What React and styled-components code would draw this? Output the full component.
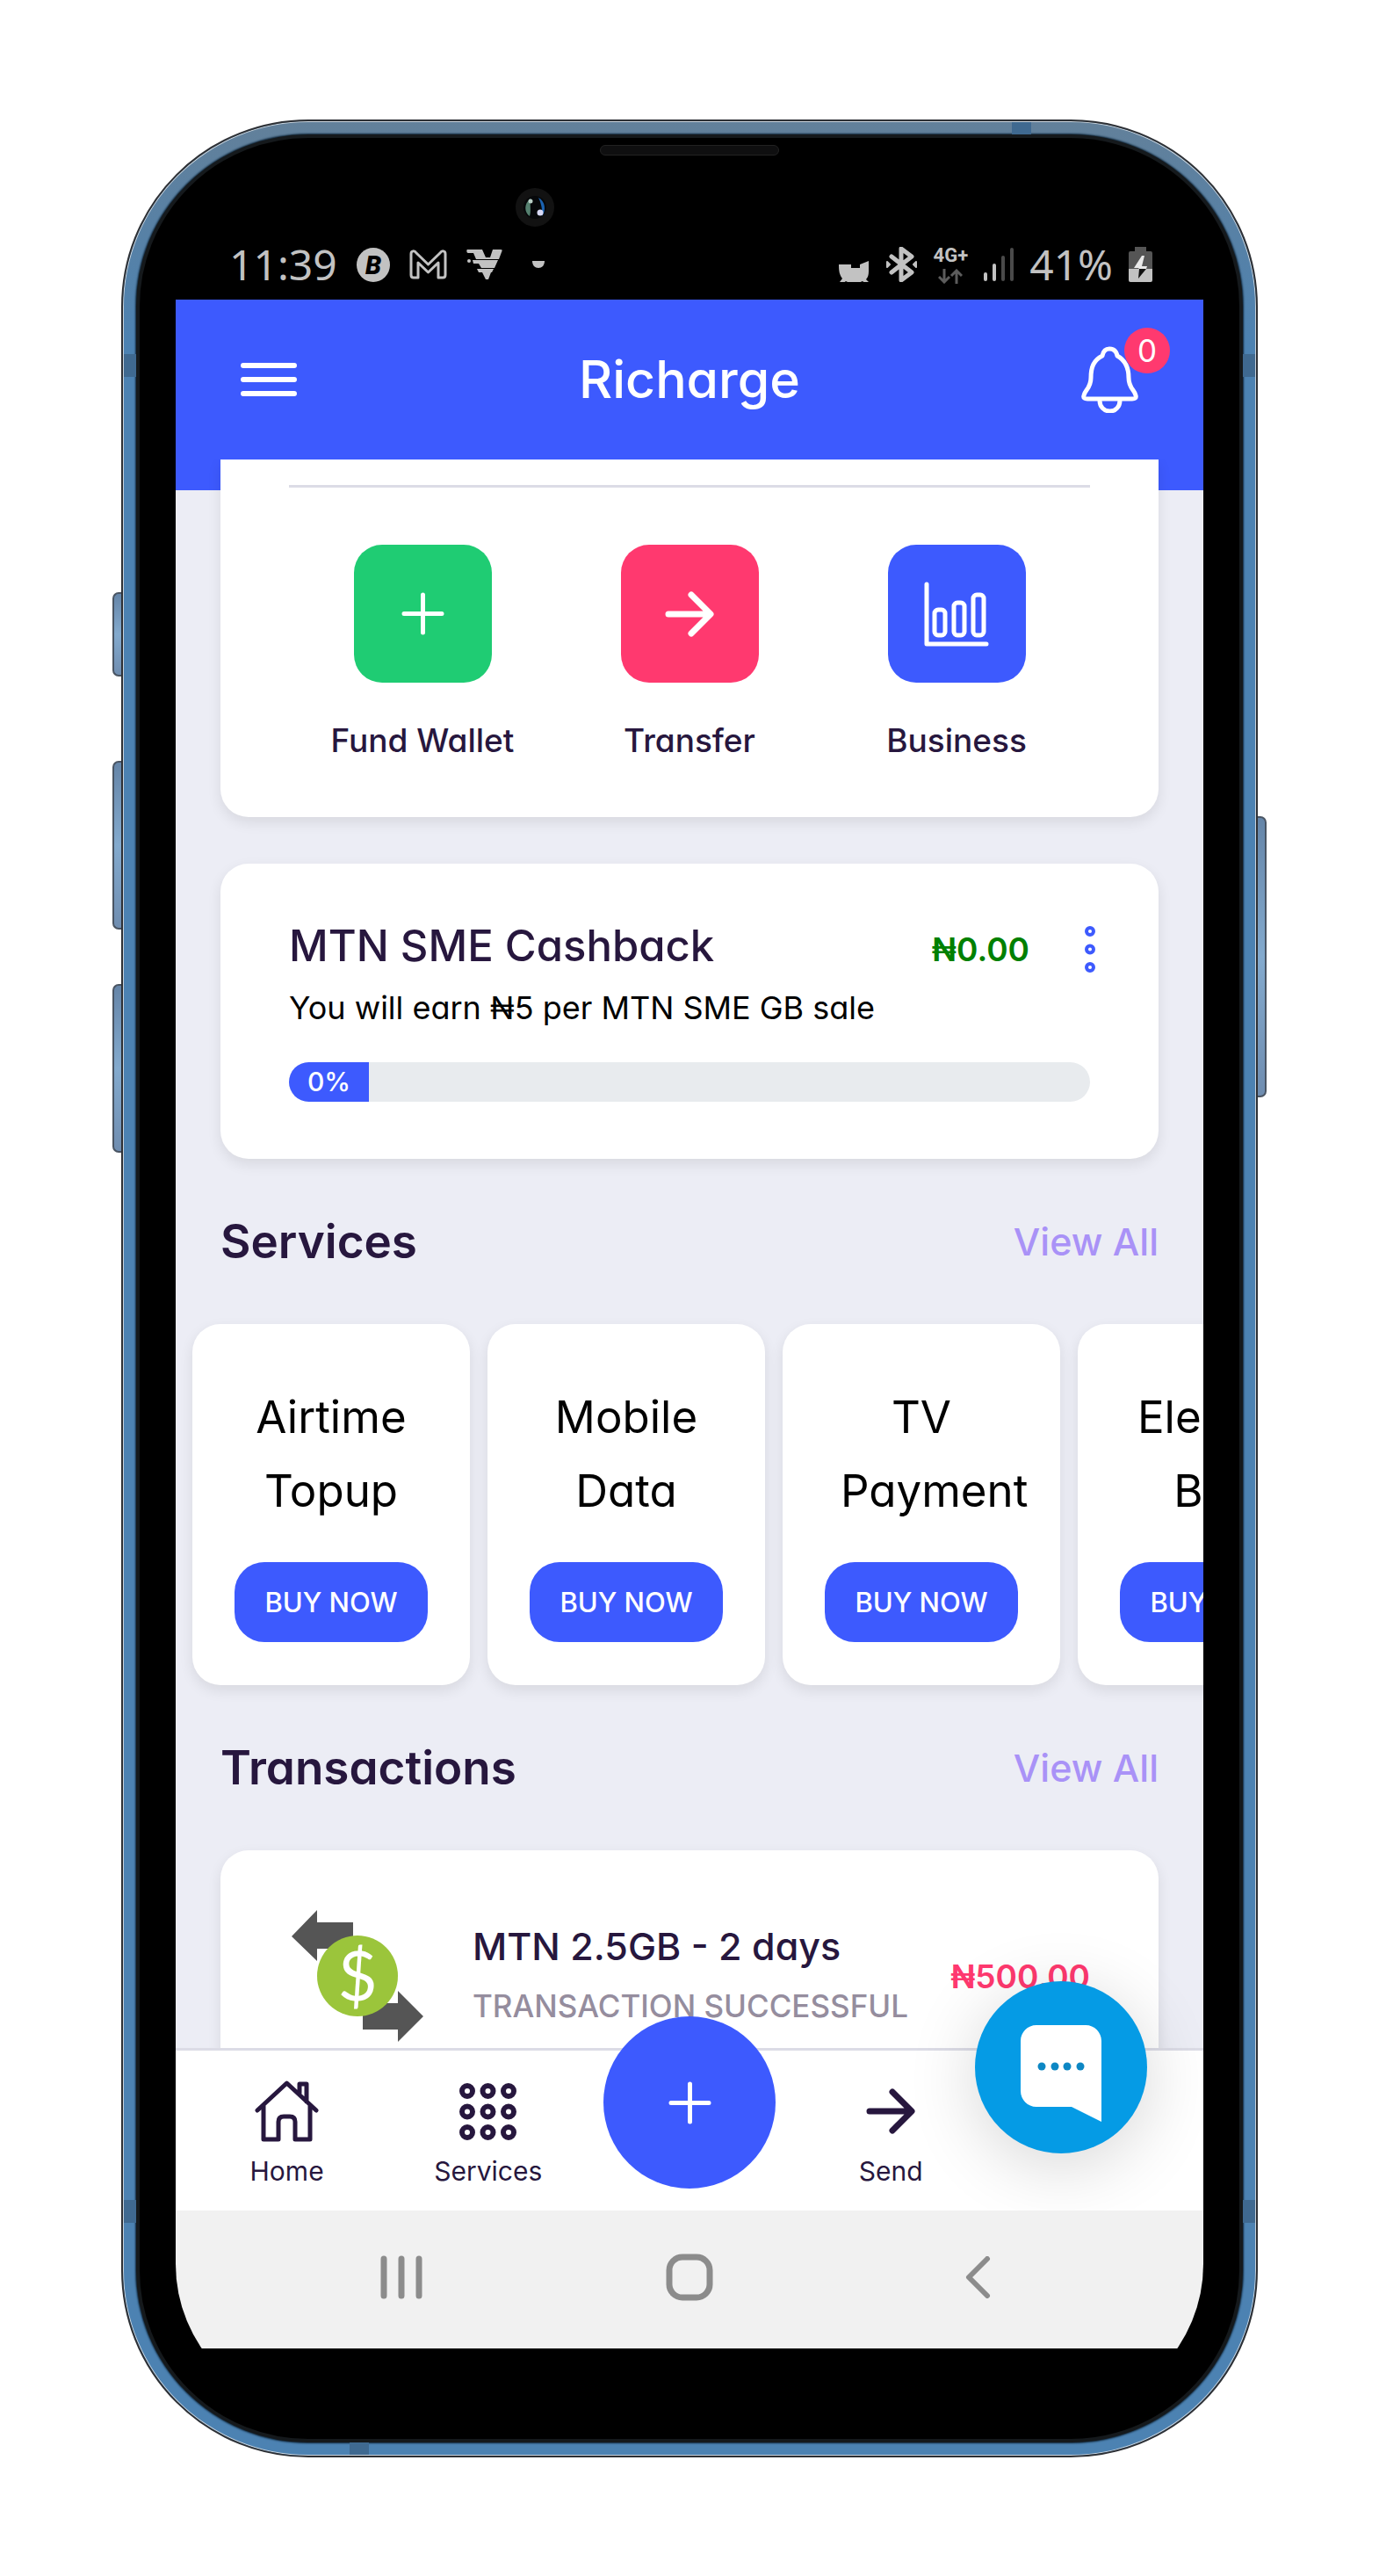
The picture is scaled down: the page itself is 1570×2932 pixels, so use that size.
import React from "react";
import styled, { createGlobalStyle } from "styled-components";

const color = {
  primary: "#3d5afe",
  danger: "#ff396f",
  success: "#1fcc73",
  ink: "#27173e",
  muted: "#958d9e",
  line: "#dcdce6",
  page: "#ecedf5",
  status: "#c2c2c2",
};

const GlobalStyle = createGlobalStyle`
  *, *::before, *::after { box-sizing: border-box; }
  body {
    margin: 0;
    background: #fff;
    color: ${color.ink};
    font-family: Inter, "Noto Sans", sans-serif;
    font-feature-settings: "cv11";
  }
  button { border: 0; padding: 0; background: none; color: inherit; font: inherit; font-feature-settings: inherit; cursor: pointer; }
  a { color: inherit; text-decoration: none; }
  h1, h2, h3, p, ul { margin: 0; padding: 0; }
  ul { list-style: none; }
  svg { display: block; flex: none; }
`;

/* ---------- device ---------- */

const Page = styled.div`
  padding: 136px 138px 135px;
`;

const Phone = styled.div`
  position: relative;
  display: flex;
  max-width: 1294px;
  margin: 0 auto;
  aspect-ratio: 1294 / 2661;
  padding: 15px;
  border: 2px solid #2d3035;
  border-radius: 213px;
  background: linear-gradient(#62809a, #4c82b2 260px);
  box-shadow: inset 0 0 0 1px #c9d3dc;
`;

const SideKey = styled.span`
  position: absolute;
  top: ${(p) => p.$top}px;
  ${(p) => p.$side}: -12px;
  width: 10px;
  height: ${(p) => p.$height}px;
  border: 2px solid #4a5563;
  border-${(p) => (p.$side === "left" ? "right" : "left")}: 0;
  border-radius: ${(p) => (p.$side === "left" ? "7px 0 0 7px" : "0 7px 7px 0")};
  background: linear-gradient(#6585a8, #83aace 50%, #6f8db0);
`;

const AntennaBand = styled.span`
  position: absolute;
  ${(p) => p.$edge}: 1px;
  ${(p) => (p.$edge === "left" || p.$edge === "right" ? "top" : "left")}: ${(p) => p.$at}px;
  width: ${(p) => (p.$edge === "left" || p.$edge === "right" ? 14 : 22)}px;
  height: ${(p) => (p.$edge === "left" || p.$edge === "right" ? 26 : 14)}px;
  background: #3f6990;
`;

const Bezel = styled.div`
  flex: 1;
  min-width: 0;
  display: flex;
  flex-direction: column;
  padding: 114px 41px 103px;
  border: 4px solid #15191c;
  border-radius: 196px;
  background: #000;
  box-shadow: 0 0 2px 1px #10273b;
`;

const Speaker = styled.span`
  position: absolute;
  top: 27px;
  left: 50%;
  width: 204px;
  height: 12px;
  margin-left: -102px;
  border: 1px solid #222;
  border-radius: 6px;
  background: #0f0f10;
`;

const Camera = styled.span`
  position: absolute;
  top: 76px;
  left: 447px;
  display: grid;
  place-items: center;
  width: 44px;
  height: 44px;
  border-radius: 50%;
  background: #121212;
`;

/* ---------- status bar ---------- */

const StatusBar = styled.div`
  display: flex;
  justify-content: space-between;
  align-items: center;
  height: 60px;
  margin-bottom: 10px;
  padding: 0 58px 0 61px;
  color: ${color.status};
  font-family: "Noto Sans", sans-serif;
  font-size: 48px;
  line-height: 60px;
`;

const StatusGroup = styled.div`
  display: flex;
  align-items: center;
  gap: ${(p) => p.$gap}px;
`;

const Network = styled.span`
  display: flex;
  flex-direction: column;
  align-items: center;
  gap: 4px;
  font-family: Roboto, sans-serif;
  font-size: 22px;
  font-weight: 700;
  line-height: 22px;
`;

/* ---------- screen ---------- */

const Screen = styled.div`
  flex: 1;
  min-height: 0;
  display: flex;
  flex-direction: column;
  overflow: hidden;
`;

const Header = styled.header`
  display: grid;
  grid-template-columns: 1fr auto 1fr;
  align-items: center;
  flex: none;
  height: 182px;
  padding: 0 74px;
  background: ${color.primary};
  color: #fff;
`;

const AppTitle = styled.h1`
  font-size: 59px;
  font-weight: 500;
  line-height: 80px;
`;

const BellButton = styled.button`
  position: relative;
  justify-self: end;
`;

const Badge = styled.span`
  position: absolute;
  top: -21px;
  right: -36px;
  width: 52px;
  height: 52px;
  border-radius: 50%;
  background: ${color.danger};
  font-size: 35px;
  line-height: 52px;
  text-align: center;
`;

const Content = styled.main`
  flex: 1;
  min-height: 0;
  overflow: hidden;
  padding: 0 51px;
  background: linear-gradient(${color.primary} 35px, ${color.page} 35px);
`;

const Card = styled.section`
  border-radius: ${(p) => (p.$open ? "0 0 32px 32px" : "32px")};
  padding: ${(p) => p.$pad};
  margin-bottom: ${(p) => (p.$gap ? 53 : 0)}px;
  background: #fff;
  box-shadow: 0 6px 16px rgba(0, 0, 0, 0.09);
`;

const Divider = styled.hr`
  height: 3px;
  margin: 0 0 65px;
  border: 0;
  background: ${color.line};
`;

const Actions = styled.div`
  display: grid;
  grid-template-columns: repeat(3, 1fr);
`;

const Action = styled.a`
  display: flex;
  flex-direction: column;
  align-items: center;
  gap: 38px;
  font-size: 37px;
  font-weight: 500;
  line-height: 56px;
  white-space: nowrap;
`;

const ActionTile = styled.span`
  display: grid;
  place-items: center;
  width: 157px;
  height: 157px;
  border-radius: 32px;
  background: ${(p) => p.$bg};
  color: #fff;
`;

const CashbackHead = styled.div`
  display: flex;
  justify-content: space-between;
  height: 60px;
`;

const CashbackTitle = styled.h2`
  font-size: 49px;
  font-weight: 500;
  line-height: 60px;
`;

const CashbackSide = styled.div`
  display: flex;
  align-items: center;
  align-self: flex-end;
  gap: 63px;
  margin-right: -6px;
  color: ${color.primary};
`;

const Amount = styled.strong`
  color: ${(p) => (p.$debit ? color.danger : "#008000")};
  font-size: 37px;
  font-weight: 600;
  line-height: 53px;
`;

const CashbackNote = styled.p`
  margin: 15px 0 37px;
  color: #000;
  font-size: 36px;
  line-height: 50px;
`;

const Track = styled.div`
  height: 45px;
  overflow: hidden;
  border-radius: 23px;
  background: #e8ebee;
`;

const Fill = styled.div`
  width: 10%;
  height: 100%;
  background: ${color.primary};
  color: #fff;
  font-size: 30px;
  font-weight: 500;
  line-height: 45px;
  text-align: center;
`;

const SectionHead = styled.div`
  display: flex;
  justify-content: space-between;
  align-items: center;
  height: 60px;
  margin: 64px 0;
`;

const SectionTitle = styled.h2`
  font-size: 53px;
  font-weight: 600;
  line-height: 60px;
`;

const ViewAll = styled.a`
  color: #a992f7;
  font-size: 43px;
  font-weight: 500;
  line-height: 60px;
`;

const ServiceRow = styled.ul`
  display: flex;
  gap: 20px;
  margin: 0 -51px;
  padding-left: 19px;
`;

const ServiceCard = styled.li`
  display: flex;
  flex: none;
  flex-direction: column;
  align-items: center;
  width: 316px;
  padding: 64px 48px 49px;
  border-radius: 32px;
  background: #fff;
  box-shadow: 0 6px 16px rgba(0, 0, 0, 0.09);
`;

const ServiceName = styled.h3`
  width: 184px;
  color: #000;
  font-size: 51px;
  font-weight: 400;
  line-height: 84px;
  text-align: center;
`;

const BuyButton = styled.button`
  width: 220px;
  height: 91px;
  margin-top: 39px;
  border-radius: 34px;
  background: ${color.primary};
  color: #fff;
  font-size: 31px;
  font-weight: 500;
  line-height: 91px;
`;

const Transaction = styled.a`
  display: flex;
  align-items: center;
`;

const TransactionText = styled.div`
  flex: 1;
  margin-left: 56px;
  white-space: nowrap;
`;

const TransactionName = styled.h3`
  font-size: 43px;
  font-weight: 500;
  line-height: 68px;
`;

const TransactionStatus = styled.p`
  color: ${color.muted};
  font-size: 35px;
  font-weight: 500;
  line-height: 68px;
`;

/* ---------- bottom ---------- */

const TabBar = styled.nav`
  position: relative;
  display: grid;
  grid-template-columns: repeat(5, 1fr);
  flex: none;
  height: 185px;
  padding: 33px 12px 0;
  border-top: 3px solid ${color.line};
  background: #fff;
`;

const Tab = styled.a`
  display: flex;
  flex-direction: column;
  align-items: center;
  gap: 12px;
  font-size: 30px;
  line-height: 40px;
`;

const TabIcon = styled.span`
  display: grid;
  place-items: center;
  height: 72px;
`;

const RoundButton = styled.button`
  position: absolute;
  display: grid;
  place-items: center;
  width: 196px;
  height: 196px;
  border-radius: 50%;
  color: #fff;
`;

const AddButton = styled(RoundButton)`
  top: -39px;
  left: 50%;
  margin-left: -98px;
  background: ${color.primary};
`;

const ChatButton = styled(RoundButton)`
  right: 64px;
  bottom: 65px;
  padding-top: 14px;
  background: #059be5;
  box-shadow: 0 14px 80px rgba(0, 0, 0, 0.16);
`;

const SystemNavClip = styled.div`
  position: relative;
  flex: none;
  height: 157px;
  overflow: hidden;
  background: #000;
`;

const SystemNav = styled.div`
  display: grid;
  grid-template-columns: 1fr 106px 1fr;
  align-items: center;
  height: 231px;
  padding: 0 233px 80px;
  border-radius: 0 0 170px 170px;
  background: #f1f1f1;
  color: #8c8c8c;
`;

const SystemKey = styled.button`
  justify-self: ${(p) => p.$align};
`;

/* ---------- drawings ---------- */

const Icon = ({ w, h, stroke = 5, children }) => (
  <svg
    width={w}
    height={h}
    viewBox={`0 0 ${w} ${h}`}
    fill="none"
    stroke="currentColor"
    strokeWidth={stroke}
    strokeLinecap="round"
    strokeLinejoin="round"
    aria-hidden="true"
  >
    {children}
  </svg>
);

const MenuIcon = () => (
  <Icon w={64} h={40} stroke={6}>
    <path d="M3 4h58M3 20h58M3 36h58" />
  </Icon>
);

const BellIcon = () => (
  <Icon w={65} h={76}>
    <path d="M32 3c-5 0-7 3-8 8C14 16 11 24 11 36c0 12-7 14-8 20-1 3 1 4 4 4h51c3 0 5-1 4-4-1-6-8-8-8-20 0-12-4-20-13-25-1-5-4-8-9-8z" />
    <path d="M21 62c0 7 5 12 11.500 12S44 69 44 62" />
  </Icon>
);

const PlusIcon = () => (
  <Icon w={49} h={49}>
    <path d="M3 24.500h43M24.500 3v43" />
  </Icon>
);

const ArrowIcon = () => (
  <Icon w={56} h={52} stroke={7}>
    <path d="M4 26h46M30 4l22 22-22 22" />
  </Icon>
);

const ChartIcon = () => (
  <Icon w={74} h={74}>
    <path d="M3 3v68h68" />
    <rect x="12" y="32" width="12" height="29" rx="4" />
    <rect x="34" y="24" width="12" height="37" rx="4" />
    <rect x="56" y="15" width="12" height="46" rx="4" />
  </Icon>
);

const DotsIcon = () => (
  <Icon w={12} h={53} stroke={4}>
    <circle cx="6" cy="6" r="4" />
    <circle cx="6" cy="26.500" r="4" />
    <circle cx="6" cy="47" r="4" />
  </Icon>
);

const HomeIcon = () => (
  <Icon w={73} h={70}>
    <path d="M3 34L36.500 3 70 34M10 29v38h17V47c0-4 2-6 6-6h7c4 0 6 2 6 6v20h17V29M51 14V4h8v20" />
  </Icon>
);

const GridIcon = () => (
  <Icon w={65} h={65} stroke={6}>
    {[9, 32.5, 56].map((y) =>
      [9, 32.5, 56].map((x) => <circle key={`${x}-${y}`} cx={x} cy={y} r="6" />)
    )}
  </Icon>
);

const ExchangeIcon = () => (
  <svg width="153" height="150" viewBox="-3 0 153 150" aria-hidden="true">
    <path d="M0 30L29 0v14h41v30H29v14zM150 121l-29-29v14H81v30h40v14z" fill="#555" />
    <circle cx="75" cy="75" r="46" fill="#9bc53b" />
    <text x="75" y="103" textAnchor="middle" fill="#fff" fontFamily="Lato, sans-serif" fontSize="78">
      $
    </text>
  </svg>
);

const ChatIcon = () => (
  <svg width="92" height="110" viewBox="0 0 92 110" aria-hidden="true">
    <path d="M18 0h56c10 0 18 8 18 18v92L58 93H18C8 93 0 85 0 75V18C0 8 8 0 18 0z" fill="#fff" />
    <g fill="#0d87c4">
      <circle cx="24" cy="47" r="4.500" />
      <circle cx="39" cy="47" r="4.500" />
      <circle cx="53" cy="47" r="4.500" />
      <circle cx="68" cy="47" r="4.500" />
    </g>
  </svg>
);

const LensIcon = () => (
  <svg width="26" height="26" viewBox="0 0 26 26" aria-hidden="true">
    <circle cx="13" cy="13" r="13" fill="#06080a" />
    <path d="M8 3C0 9 1 19 7 23c2-6 0-12 1-20z" fill="#55806f" />
    <path d="M17 2c8 4 9 15 4 21 1-7-1-15-4-21z" fill="#1b62b0" />
    <circle cx="8" cy="6" r="2.500" fill="#b8cfc6" />
    <circle cx="19" cy="19" r="3.500" fill="#d9daf5" />
  </svg>
);

const CoinIcon = () => (
  <svg width="38" height="39" viewBox="0 0 38 39" aria-hidden="true">
    <ellipse cx="19" cy="19.500" rx="19" ry="19.500" fill={color.status} />
    <text x="19" y="30" textAnchor="middle" fill="#000" fontFamily="Roboto, sans-serif" fontStyle="italic" fontWeight="900" fontSize="29">
      B
    </text>
  </svg>
);

const MailIcon = () => (
  <Icon w={43} h={34} stroke={3}>
    <path d="M2 29V5c0-4 4-4 6-1l13.500 13L35 4c2-3 6-3 6 1v24c0 2-1 3-3 3h-5V15L21.500 26 10 15v17H5c-2 0-3-1-3-3z" />
  </Icon>
);

const WingIcon = () => (
  <svg width="41" height="34" viewBox="0 0 41 34" fill={color.status} aria-hidden="true">
    <path d="M1 0h17l4 9h5l3-9h9c2 0 2 1 1 3l-3 8H11L8 4H2C0 4 0 0 1 0zM7 12h29l-4 9H17l-3-5H8zM12 22h19l-2 4h-1l-3 8h-3l-4-8h-4z" />
    <circle cx="3" cy="13" r="2" />
  </svg>
);

const MoreDot = () => (
  <svg width="26" height="8" viewBox="-12 0 26 8" fill={color.status} aria-hidden="true">
    <path d="M0 0h14c0 5-3 8-7 8S0 5 0 0z" />
  </svg>
);

const PotIcon = () => (
  <svg width="35" height="40" viewBox="0 0 35 40" fill={color.status} aria-hidden="true">
    <path d="M0 20h14v4h10v-4l10-4v12c0 4-1 7-3 9l3 3-3 2-4-3c-6 3-14 3-19 0l-4 3-3-2 3-4c-3-4-4-8-4-15z" />
  </svg>
);

const BluetoothIcon = () => (
  <Icon w={37} h={40} stroke={5}>
    <path d="M7 11l23 18-12 9V2l12 9L7 29" />
    <path d="M2 17l3 3-3 3zM35 17l-3 3 3 3z" strokeWidth="2" fill="currentColor" />
  </Icon>
);

const TrafficIcon = () => (
  <svg width="28" height="17" viewBox="0 0 28 17" fill="none" stroke="#5c5c5c" strokeWidth="3" aria-hidden="true">
    <path d="M7 0v15M1 9l6 6 6-6M21 17V2M15 8l6-6 6 6" />
  </svg>
);

const SignalIcon = () => (
  <Icon w={34} h={38} stroke={4}>
    <path d="M2 30v6M12 20v16" />
    <path d="M22 11v25M32 2v34" stroke="#4a4a4a" />
  </Icon>
);

const BatteryIcon = () => (
  <svg width="27" height="40" viewBox="0 0 27 40" aria-hidden="true">
    <path d="M7 0h13v5h5a2 2 0 012 2v18H0V7a2 2 0 012-2h5z" fill="#555" />
    <path d="M0 25h27v13a2 2 0 01-2 2H2a2 2 0 01-2-2z" fill={color.status} />
    <path d="M15 10L6 24h6l-1 1h9l1-3h-6l3-12z" fill="#e8e8e8" />
    <path d="M12 25h8l-9 11z" fill="#111" />
  </svg>
);

const RecentsIcon = () => (
  <Icon w={48} h={50} stroke={7}>
    <path d="M4 4v42M24 4v42M44 4v42" />
  </Icon>
);

const HomeKeyIcon = () => (
  <Icon w={54} h={54} stroke={7}>
    <rect x="4" y="4" width="46" height="46" rx="15" />
  </Icon>
);

const BackIcon = () => (
  <Icon w={38} h={48} stroke={6}>
    <path d="M25 3L4 24l21 21" />
  </Icon>
);

/* ---------- data ---------- */

const actions = [
  { label: "Fund Wallet", bg: color.success, icon: <PlusIcon /> },
  { label: "Transfer", bg: color.danger, icon: <ArrowIcon /> },
  { label: "Business", bg: color.primary, icon: <ChartIcon /> },
];

const services = [
  ["Airtime", "Topup"],
  ["Mobile", "Data"],
  ["TV", "Payment"],
  ["Electric", "Bills"],
];

export default function App() {
  return (
    <Page>
      <GlobalStyle />
      <Phone>
        <SideKey $side="left" $top={536} $height={96} />
        <SideKey $side="left" $top={728} $height={192} />
        <SideKey $side="left" $top={982} $height={192} />
        <SideKey $side="right" $top={791} $height={320} />
        <AntennaBand $edge="left" $at={265} />
        <AntennaBand $edge="right" $at={265} />
        <AntennaBand $edge="left" $at={2366} />
        <AntennaBand $edge="right" $at={2366} />
        <AntennaBand $edge="top" $at={1012} />
        <AntennaBand $edge="bottom" $at={258} />
        <Speaker />
        <Camera>
          <LensIcon />
        </Camera>

        <Bezel>
          <StatusBar>
            <StatusGroup $gap={22}>
              <span>11:39</span>
              <CoinIcon />
              <MailIcon />
              <WingIcon />
              <MoreDot />
            </StatusGroup>
            <StatusGroup $gap={18}>
              <PotIcon />
              <BluetoothIcon />
              <Network>
                4G+
                <TrafficIcon />
              </Network>
              <SignalIcon />
              <span>41%</span>
              <BatteryIcon />
            </StatusGroup>
          </StatusBar>

          <Screen>
            <Header>
              <button type="button" aria-label="Menu">
                <MenuIcon />
              </button>
              <AppTitle>Richarge</AppTitle>
              <BellButton type="button" aria-label="Notifications">
                <BellIcon />
                <Badge>0</Badge>
              </BellButton>
            </Header>

            <Content>
              <Card $open $gap $pad="29px 78px 59px">
                <Divider />
                <Actions>
                  {actions.map((a) => (
                    <Action href="#" key={a.label}>
                      <ActionTile $bg={a.bg}>{a.icon}</ActionTile>
                      {a.label}
                    </Action>
                  ))}
                </Actions>
              </Card>

              <Card $pad="64px 78px 65px">
                <CashbackHead>
                  <CashbackTitle>MTN SME Cashback</CashbackTitle>
                  <CashbackSide>
                    <Amount>₦0.00</Amount>
                    <button type="button" aria-label="Cashback options">
                      <DotsIcon />
                    </button>
                  </CashbackSide>
                </CashbackHead>
                <CashbackNote>You will earn ₦5 per MTN SME GB sale</CashbackNote>
                <Track role="progressbar" aria-label="Cashback progress" aria-valuenow={0}>
                  <Fill>0%</Fill>
                </Track>
              </Card>

              <SectionHead>
                <SectionTitle>Services</SectionTitle>
                <ViewAll href="#">View All</ViewAll>
              </SectionHead>
              <ServiceRow>
                {services.map(([first, second]) => (
                  <ServiceCard key={first}>
                    <ServiceName>
                      {first}
                      <br />
                      {second}
                    </ServiceName>
                    <BuyButton type="button">BUY NOW</BuyButton>
                  </ServiceCard>
                ))}
              </ServiceRow>

              <SectionHead>
                <SectionTitle>Transactions</SectionTitle>
                <ViewAll href="#">View All</ViewAll>
              </SectionHead>
              <Card $pad="68px 78px">
                <Transaction href="#">
                  <ExchangeIcon />
                  <TransactionText>
                    <TransactionName>MTN 2.5GB - 2 days</TransactionName>
                    <TransactionStatus>TRANSACTION SUCCESSFUL</TransactionStatus>
                  </TransactionText>
                  <Amount $debit>₦500.00</Amount>
                </Transaction>
              </Card>
            </Content>

            <TabBar>
              <Tab href="#">
                <TabIcon>
                  <HomeIcon />
                </TabIcon>
                Home
              </Tab>
              <Tab href="#">
                <TabIcon>
                  <GridIcon />
                </TabIcon>
                Services
              </Tab>
              <span />
              <Tab href="#">
                <TabIcon>
                  <ArrowIcon />
                </TabIcon>
                Send
              </Tab>
              <AddButton type="button" aria-label="Add">
                <PlusIcon />
              </AddButton>
              <ChatButton type="button" aria-label="Chat">
                <ChatIcon />
              </ChatButton>
            </TabBar>

            <SystemNavClip>
              <SystemNav>
                <SystemKey $align="start" type="button" aria-label="Recent apps">
                  <RecentsIcon />
                </SystemKey>
                <SystemKey $align="center" type="button" aria-label="Home screen">
                  <HomeKeyIcon />
                </SystemKey>
                <SystemKey $align="end" type="button" aria-label="Back">
                  <BackIcon />
                </SystemKey>
              </SystemNav>
            </SystemNavClip>
          </Screen>
        </Bezel>
      </Phone>
    </Page>
  );
}
